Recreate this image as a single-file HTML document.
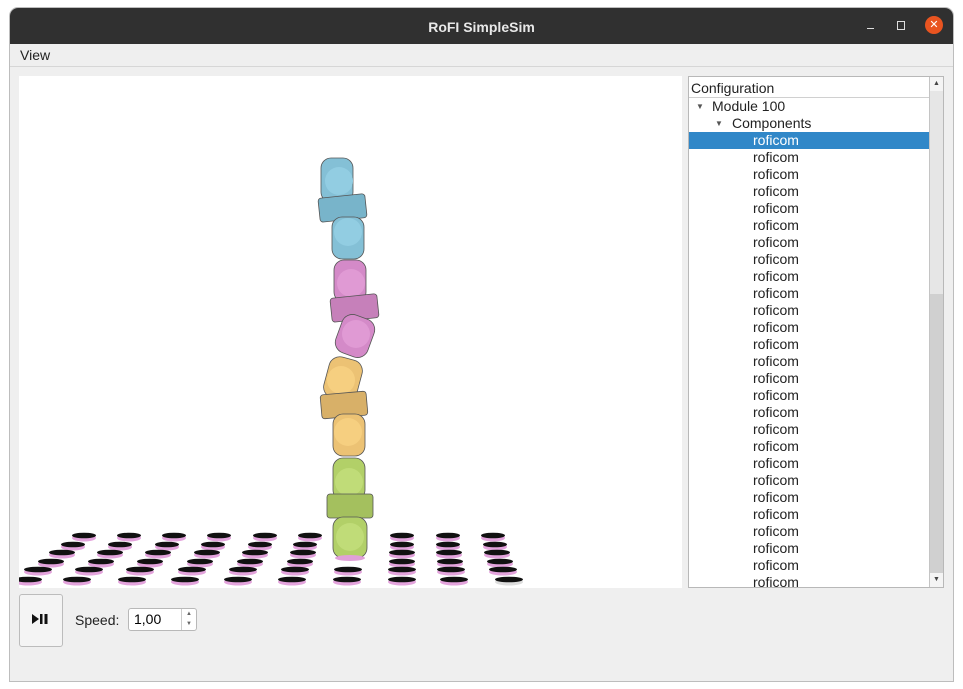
<!DOCTYPE html>
<html><head><meta charset="utf-8"><style>
body{margin:0;width:963px;height:689px;background:#fff;font-family:"Liberation Sans","DejaVu Sans",sans-serif;overflow:hidden;position:relative}
.win{position:absolute;left:10px;top:8px;width:943px;height:673px;background:#efefef;border-radius:8px 8px 0 0;overflow:hidden;box-shadow:0 0 0 1px #bdbdbd}
.title{position:absolute;left:0;top:0;right:0;height:36px;background:#303030;color:#e8e8e8;font-weight:bold;font-size:14px;text-align:center;line-height:38px}
.menu{position:absolute;left:0;top:36px;right:0;height:22px;border-bottom:1px solid #d6d6d6;font-size:14px;line-height:22px;padding-left:10px;color:#222}
.view{position:absolute;left:9px;top:68px;width:663px;height:512px;background:#fff}
.tree{position:absolute;left:678px;top:68px;width:256px;height:512px;background:#fff;border:1px solid #b8b8b8;box-sizing:border-box;font-size:14px;color:#222}
.row{position:absolute;height:17px;line-height:17px;left:0;right:14px}
.sb{position:absolute;right:0;top:0;width:13px;bottom:0;background:#d0d0d0;border-left:1px solid #c4c4c4}
.btn{position:absolute;left:9px;top:586px;width:44px;height:53px;border:1px solid #bcbcbc;border-radius:3px;background:#f4f4f4;box-sizing:border-box}
.spin{position:absolute;left:118px;top:600px;width:69px;height:23px;border:1px solid #b8b8b8;border-radius:3px;background:#fff;box-sizing:border-box;font-size:14px;line-height:21px;padding-left:5px}
</style></head><body>
<div class="win">
<div class="title">RoFI SimpleSim
<span style="position:absolute;left:857px;top:20px;width:7px;height:1px;background:#ddd"></span>
<span style="position:absolute;left:887px;top:13px;width:6px;height:7px;border:1px solid #ddd"></span>
<span style="position:absolute;left:915px;top:8px;width:18px;height:18px;border-radius:50%;background:#e95420;color:#fff;font-size:11px;line-height:18px;font-weight:normal">✕</span>
</div>
<div class="menu">View</div>
<div class="view">
<svg width="663" height="512" viewBox="19 76 663 512" xmlns="http://www.w3.org/2000/svg">
<g stroke="#555" stroke-width="0.8">
<rect x="321" y="158" width="32" height="44" rx="10" fill="#84c0d6"/>
<circle cx="339" cy="181" r="14" fill="#92cde2" stroke="none"/>
<rect x="319" y="196" width="47" height="24" rx="3" fill="#78b4ca" transform="rotate(-6 342 208)"/>
<rect x="332" y="217" width="32" height="42" rx="10" fill="#84c0d6"/>
<circle cx="348" cy="232" r="14" fill="#92cde2" stroke="none"/>
<rect x="334" y="260" width="32" height="42" rx="10" fill="#d48ac8"/>
<circle cx="351" cy="283" r="14" fill="#e09ad4" stroke="none"/>
<rect x="331" y="296" width="47" height="24" rx="3" fill="#c680ba" transform="rotate(-6 354 308)"/>
<rect x="338" y="316" width="34" height="40" rx="11" fill="#d48ac8" transform="rotate(20 355 336)"/>
<circle cx="356" cy="334" r="14" fill="#e09ad4" stroke="none"/>
<rect x="326" y="358" width="34" height="42" rx="11" fill="#ecc274" transform="rotate(15 343 379)"/>
<circle cx="341" cy="380" r="14" fill="#f6cf80" stroke="none"/>
<rect x="321" y="393" width="46" height="24" rx="3" fill="#d8b068" transform="rotate(-5 344 405)"/>
<rect x="333" y="414" width="32" height="42" rx="10" fill="#ecc274"/>
<circle cx="348" cy="432" r="14" fill="#f6cf80" stroke="none"/>
<rect x="333" y="458" width="32" height="42" rx="10" fill="#b2d068"/>
<circle cx="349" cy="482" r="14" fill="#c0dc78" stroke="none"/>
<rect x="327" y="494" width="46" height="24" rx="3" fill="#a4c05e"/>
<rect x="333" y="517" width="34" height="41" rx="10" fill="#b2d068"/>
<circle cx="350" cy="537" r="14" fill="#c0dc78" stroke="none"/>
<ellipse cx="350" cy="558" rx="15" ry="3" fill="#e0a0d8" stroke="none"/>
</g>
<g fill="#e3a3dc">
<ellipse cx="84" cy="538" rx="12" ry="3.5"/><ellipse cx="129" cy="538" rx="12" ry="3.5"/><ellipse cx="174" cy="538" rx="12" ry="3.5"/><ellipse cx="219" cy="538" rx="12" ry="3.5"/><ellipse cx="265" cy="538" rx="12" ry="3.5"/><ellipse cx="310" cy="538" rx="12" ry="3.5"/><ellipse cx="402" cy="538" rx="12" ry="3.5"/><ellipse cx="448" cy="538" rx="12" ry="3.5"/><ellipse cx="493" cy="538" rx="12" ry="3.5"/>
<ellipse cx="73" cy="547" rx="12" ry="3.5"/><ellipse cx="120" cy="547" rx="12" ry="3.5"/><ellipse cx="167" cy="547" rx="12" ry="3.5"/><ellipse cx="213" cy="547" rx="12" ry="3.5"/><ellipse cx="260" cy="547" rx="12" ry="3.5"/><ellipse cx="305" cy="547" rx="12" ry="3.5"/><ellipse cx="402" cy="547" rx="12" ry="3.5"/><ellipse cx="448" cy="547" rx="12" ry="3.5"/><ellipse cx="495" cy="547" rx="12" ry="3.5"/>
<ellipse cx="62" cy="555" rx="13" ry="3.5"/><ellipse cx="110" cy="555" rx="13" ry="3.5"/><ellipse cx="158" cy="555" rx="13" ry="3.5"/><ellipse cx="207" cy="555" rx="13" ry="3.5"/><ellipse cx="255" cy="555" rx="13" ry="3.5"/><ellipse cx="303" cy="555" rx="13" ry="3.5"/><ellipse cx="402" cy="555" rx="13" ry="3.5"/><ellipse cx="449" cy="555" rx="13" ry="3.5"/><ellipse cx="497" cy="555" rx="13" ry="3.5"/>
<ellipse cx="51" cy="564" rx="13" ry="3.5"/><ellipse cx="101" cy="564" rx="13" ry="3.5"/><ellipse cx="150" cy="564" rx="13" ry="3.5"/><ellipse cx="200" cy="564" rx="13" ry="3.5"/><ellipse cx="250" cy="564" rx="13" ry="3.5"/><ellipse cx="300" cy="564" rx="13" ry="3.5"/><ellipse cx="402" cy="564" rx="13" ry="3.5"/><ellipse cx="450" cy="564" rx="13" ry="3.5"/><ellipse cx="500" cy="564" rx="13" ry="3.5"/>
<ellipse cx="38" cy="572" rx="14" ry="3.5"/><ellipse cx="89" cy="572" rx="14" ry="3.5"/><ellipse cx="140" cy="572" rx="14" ry="3.5"/><ellipse cx="192" cy="572" rx="14" ry="3.5"/><ellipse cx="243" cy="572" rx="14" ry="3.5"/><ellipse cx="295" cy="572" rx="14" ry="3.5"/><ellipse cx="348" cy="572" rx="14" ry="3.5"/><ellipse cx="402" cy="572" rx="14" ry="3.5"/><ellipse cx="451" cy="572" rx="14" ry="3.5"/><ellipse cx="503" cy="572" rx="14" ry="3.5"/>
<ellipse cx="28" cy="582" rx="14" ry="3.5"/><ellipse cx="77" cy="582" rx="14" ry="3.5"/><ellipse cx="132" cy="582" rx="14" ry="3.5"/><ellipse cx="185" cy="582" rx="14" ry="3.5"/><ellipse cx="238" cy="582" rx="14" ry="3.5"/><ellipse cx="292" cy="582" rx="14" ry="3.5"/><ellipse cx="347" cy="582" rx="14" ry="3.5"/><ellipse cx="402" cy="582" rx="14" ry="3.5"/><ellipse cx="454" cy="582" rx="14" ry="3.5"/><ellipse cx="509" cy="582" rx="14" ry="3.5" fill="#ddd"/>
</g>
<g fill="#111">
<ellipse cx="84" cy="535.5" rx="12" ry="2.8"/><ellipse cx="129" cy="535.5" rx="12" ry="2.8"/><ellipse cx="174" cy="535.5" rx="12" ry="2.8"/><ellipse cx="219" cy="535.5" rx="12" ry="2.8"/><ellipse cx="265" cy="535.5" rx="12" ry="2.8"/><ellipse cx="310" cy="535.5" rx="12" ry="2.8"/><ellipse cx="402" cy="535.5" rx="12" ry="2.8"/><ellipse cx="448" cy="535.5" rx="12" ry="2.8"/><ellipse cx="493" cy="535.5" rx="12" ry="2.8"/>
<ellipse cx="73" cy="544.5" rx="12" ry="2.8"/><ellipse cx="120" cy="544.5" rx="12" ry="2.8"/><ellipse cx="167" cy="544.5" rx="12" ry="2.8"/><ellipse cx="213" cy="544.5" rx="12" ry="2.8"/><ellipse cx="260" cy="544.5" rx="12" ry="2.8"/><ellipse cx="305" cy="544.5" rx="12" ry="2.8"/><ellipse cx="402" cy="544.5" rx="12" ry="2.8"/><ellipse cx="448" cy="544.5" rx="12" ry="2.8"/><ellipse cx="495" cy="544.5" rx="12" ry="2.8"/>
<ellipse cx="62" cy="552.5" rx="13" ry="2.8"/><ellipse cx="110" cy="552.5" rx="13" ry="2.8"/><ellipse cx="158" cy="552.5" rx="13" ry="2.8"/><ellipse cx="207" cy="552.5" rx="13" ry="2.8"/><ellipse cx="255" cy="552.5" rx="13" ry="2.8"/><ellipse cx="303" cy="552.5" rx="13" ry="2.8"/><ellipse cx="402" cy="552.5" rx="13" ry="2.8"/><ellipse cx="449" cy="552.5" rx="13" ry="2.8"/><ellipse cx="497" cy="552.5" rx="13" ry="2.8"/>
<ellipse cx="51" cy="561.5" rx="13" ry="2.8"/><ellipse cx="101" cy="561.5" rx="13" ry="2.8"/><ellipse cx="150" cy="561.5" rx="13" ry="2.8"/><ellipse cx="200" cy="561.5" rx="13" ry="2.8"/><ellipse cx="250" cy="561.5" rx="13" ry="2.8"/><ellipse cx="300" cy="561.5" rx="13" ry="2.8"/><ellipse cx="402" cy="561.5" rx="13" ry="2.8"/><ellipse cx="450" cy="561.5" rx="13" ry="2.8"/><ellipse cx="500" cy="561.5" rx="13" ry="2.8"/>
<ellipse cx="38" cy="569.5" rx="14" ry="2.8"/><ellipse cx="89" cy="569.5" rx="14" ry="2.8"/><ellipse cx="140" cy="569.5" rx="14" ry="2.8"/><ellipse cx="192" cy="569.5" rx="14" ry="2.8"/><ellipse cx="243" cy="569.5" rx="14" ry="2.8"/><ellipse cx="295" cy="569.5" rx="14" ry="2.8"/><ellipse cx="348" cy="569.5" rx="14" ry="2.8"/><ellipse cx="402" cy="569.5" rx="14" ry="2.8"/><ellipse cx="451" cy="569.5" rx="14" ry="2.8"/><ellipse cx="503" cy="569.5" rx="14" ry="2.8"/>
<ellipse cx="28" cy="579.5" rx="14" ry="2.8"/><ellipse cx="77" cy="579.5" rx="14" ry="2.8"/><ellipse cx="132" cy="579.5" rx="14" ry="2.8"/><ellipse cx="185" cy="579.5" rx="14" ry="2.8"/><ellipse cx="238" cy="579.5" rx="14" ry="2.8"/><ellipse cx="292" cy="579.5" rx="14" ry="2.8"/><ellipse cx="347" cy="579.5" rx="14" ry="2.8"/><ellipse cx="402" cy="579.5" rx="14" ry="2.8"/><ellipse cx="454" cy="579.5" rx="14" ry="2.8"/><ellipse cx="509" cy="579.5" rx="14" ry="2.8"/>
</g>
</svg>
</div>
<div class="tree">
<div class="row" style="top:1px;height:19px;border-bottom:1px solid #d0d0d0;padding-left:2px;line-height:20px">Configuration</div>
<div class="row" style="top:21px;padding-left:23px"><span style="position:absolute;left:7px;font-size:8px;color:#555">▼</span>Module 100</div>
<div class="row" style="top:38px;padding-left:43px"><span style="position:absolute;left:26px;font-size:8px;color:#555">▼</span>Components</div>
<div class="row" style="top:55px;padding-left:64px;background:#3087c8;color:#fff">roficom</div>
<div class="row" style="top:72px;padding-left:64px">roficom</div>
<div class="row" style="top:89px;padding-left:64px">roficom</div>
<div class="row" style="top:106px;padding-left:64px">roficom</div>
<div class="row" style="top:123px;padding-left:64px">roficom</div>
<div class="row" style="top:140px;padding-left:64px">roficom</div>
<div class="row" style="top:157px;padding-left:64px">roficom</div>
<div class="row" style="top:174px;padding-left:64px">roficom</div>
<div class="row" style="top:191px;padding-left:64px">roficom</div>
<div class="row" style="top:208px;padding-left:64px">roficom</div>
<div class="row" style="top:225px;padding-left:64px">roficom</div>
<div class="row" style="top:242px;padding-left:64px">roficom</div>
<div class="row" style="top:259px;padding-left:64px">roficom</div>
<div class="row" style="top:276px;padding-left:64px">roficom</div>
<div class="row" style="top:293px;padding-left:64px">roficom</div>
<div class="row" style="top:310px;padding-left:64px">roficom</div>
<div class="row" style="top:327px;padding-left:64px">roficom</div>
<div class="row" style="top:344px;padding-left:64px">roficom</div>
<div class="row" style="top:361px;padding-left:64px">roficom</div>
<div class="row" style="top:378px;padding-left:64px">roficom</div>
<div class="row" style="top:395px;padding-left:64px">roficom</div>
<div class="row" style="top:412px;padding-left:64px">roficom</div>
<div class="row" style="top:429px;padding-left:64px">roficom</div>
<div class="row" style="top:446px;padding-left:64px">roficom</div>
<div class="row" style="top:463px;padding-left:64px">roficom</div>
<div class="row" style="top:480px;padding-left:64px">roficom</div>
<div class="row" style="top:497px;padding-left:64px;height:13px;overflow:hidden">roficom</div>
<div class="sb">
<div style="position:absolute;left:0;right:0;top:0;height:14px;background:#f4f4f4;font-size:7px;text-align:center;line-height:14px;color:#444">▲</div>
<div style="position:absolute;left:0;right:0;top:14px;height:203px;background:#e6e6e6"></div>
<div style="position:absolute;left:0;right:0;bottom:0;height:14px;background:#f4f4f4;font-size:7px;text-align:center;line-height:14px;color:#444">▼</div>
</div>
</div>
<div class="btn"><svg width="44" height="53" style="position:absolute;left:0;top:0"><path d="M12 19 L19 24 L12 29 Z" fill="#111"/><rect x="20" y="19" width="2.5" height="10" fill="#111"/><rect x="24.5" y="19" width="3" height="10" fill="#111"/></svg></div>
<div style="position:absolute;left:65px;top:604px;font-size:14px;color:#222">Speed:</div>
<div class="spin">1,00<span style="position:absolute;right:0;top:0;width:14px;height:21px;border-left:1px solid #ccc;font-size:6px;text-align:center;line-height:10px;color:#666">▲<br>▼</span></div>
</div>
</body></html>
